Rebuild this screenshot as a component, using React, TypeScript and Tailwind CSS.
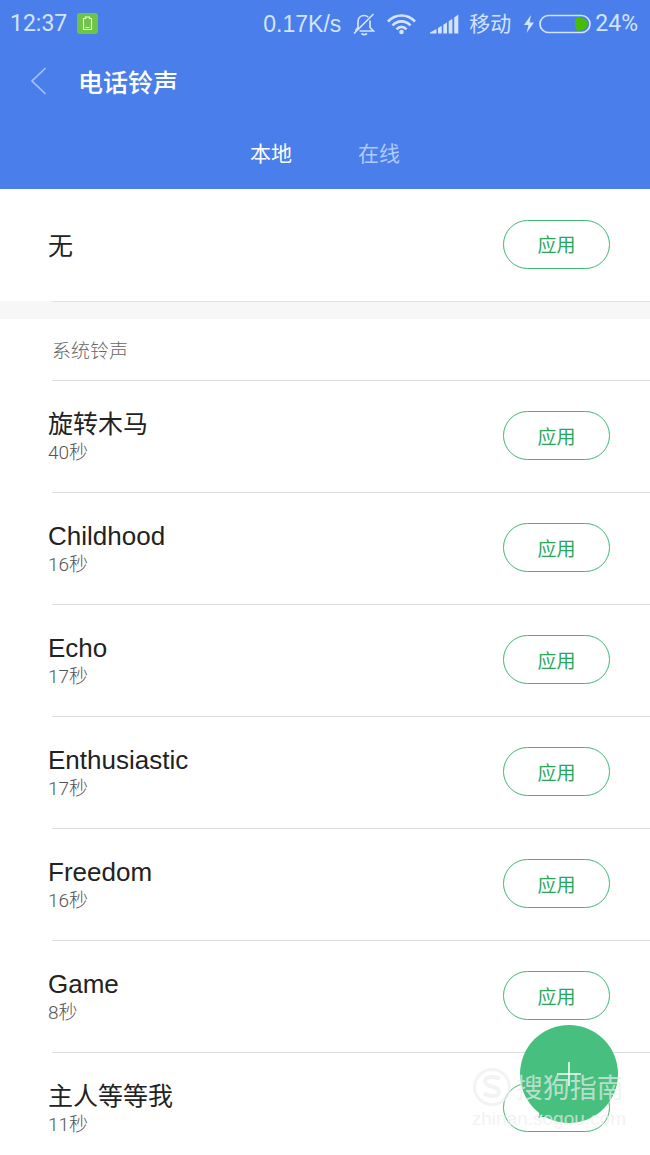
const CJK = "font-['Noto_Sans_CJK_SC',sans-serif]";

type Ringtone = { name: string; length: string; latin?: boolean };

const ringtones: Ringtone[] = [
  { name: "旋转木马", length: "40秒" },
  { name: "Childhood", length: "16秒", latin: true },
  { name: "Echo", length: "17秒", latin: true },
  { name: "Enthusiastic", length: "17秒", latin: true },
  { name: "Freedom", length: "16秒", latin: true },
  { name: "Game", length: "8秒", latin: true },
  { name: "主人等等我", length: "11秒" },
];

function ApplyButton({ label }: { label: string }) {
  return (
    <button
      type="button"
      aria-label={`应用 ${label}`}
      className="h-[49px] w-[107px] shrink-0 rounded-full border border-[#3fb574] text-[19px] leading-6 text-[#25a75c]"
    >
      应用
    </button>
  );
}

function StatusBar() {
  return (
    <div className="flex h-[47px] items-center justify-between pr-3 pl-[10px] font-['Roboto','Noto_Sans_CJK_SC',sans-serif] text-[23px] leading-6 text-[#d3e4ff]">
      <div className="flex items-center gap-[10px]">
        <span>12:37</span>
        <svg className="h-[21px] w-[21px]" viewBox="0 0 21 21" fill="none">
          <rect width="21" height="21" rx="3" fill="#6cc644" />
          <path d="M6.500 5.500h2v-1.500h4v1.500h2v11h-8z M8.500 14.500h4" stroke="#e9ffe0" strokeWidth="1.200" />
        </svg>
      </div>
      <div className="flex items-center">
        <span className="font-['Liberation_Sans',sans-serif]">0.17K/s</span>
        <svg className="ml-3 h-6 w-[22px]" viewBox="0 0 22 24" fill="none" stroke="currentColor" strokeWidth="1.700">
          <path d="M1 21.500 20.500 2M3 19V18l2-2.500V10c0-4 2.500-6.500 6-6.500 1.800 0 3.300.6 4.300 1.700M17 8.500V15.500l3.500 3.500H6.500M8.500 21.500c1.500 1.200 4 1.200 5.500 0" />
        </svg>
        <svg className="ml-3 h-6 w-[29px]" viewBox="0 0 29 24" fill="none" stroke="currentColor" strokeWidth="2.600">
          <path d="M1 9.500C8.500 1.500 20.500 1.500 28 9.500M5.500 13.500C10.500 8 18.500 8 23.500 13.500M9.500 17.300C12.500 14 16.500 14 19.500 17.300" />
          <circle cx="14.500" cy="20" r="2.300" fill="currentColor" stroke="none" />
        </svg>
        <svg className="ml-[14px] h-6 w-[29px]" viewBox="0 0 29 24" fill="currentColor">
          <path d="M0 21.500V20.500L6.500 17V21.500zM8 16 11.700 13.700V21.500H8zM13.300 12.800 17 10.500V21.500H13.300zM18.700 9.300 22.400 6.800V21.500H18.700zM24.200 5.500 28.300 2.500V21.500H24.200z" />
        </svg>
        <span className="ml-[10px] text-[21px]">移动</span>
        <svg className="ml-3 h-6 w-3" viewBox="0 0 12 24" fill="currentColor">
          <path d="M8 3 1 13h4.500L3.500 21 11 10.500H6.500z" />
        </svg>
        <svg className="ml-1 h-6 w-[52px]" viewBox="0 0 52 24" fill="none">
          <path d="M37 5.500h5a6.500 6.500 0 0 1 0 13h-5q-2-6.500 0-13z" fill="#46bd08" />
          <rect x="1" y="3.500" width="50" height="17" rx="8.500" stroke="currentColor" strokeWidth="1.700" />
        </svg>
        <span className="ml-1">24%</span>
      </div>
    </div>
  );
}

export default function App() {
  return (
    <div className={`relative flex h-screen flex-col overflow-hidden bg-white ${CJK}`}>
      <header className="shrink-0 bg-[#4a7eeb]">
        <StatusBar />
        <div className="flex h-[67px] items-center gap-8 pl-[30px]">
          <button type="button" aria-label="返回" className="text-[#a4c2f8]">
            <svg className="h-7 w-4" viewBox="0 0 16 28" fill="none" stroke="currentColor" strokeWidth="1.700">
              <path d="M15.500 1 2 14l13.500 13" />
            </svg>
          </button>
          <h1 className="text-[25px] leading-8 font-medium text-white">电话铃声</h1>
        </div>
        <nav className="flex h-[75px] justify-center gap-[66px] pt-[22px] text-[21px] leading-8">
          <button type="button" aria-current="page" className="h-8 text-white">
            本地
          </button>
          <button type="button" className="h-8 text-[#b0caff]">
            在线
          </button>
        </nav>
      </header>

      <main className="min-h-0 flex-1 overflow-y-auto [scrollbar-width:none]">
        <div className="flex h-28 items-center justify-between pr-10 pb-[2px] pl-12">
          <span className="text-[25px] leading-8 text-[#222]">无</span>
          <ApplyButton label="无" />
        </div>
        <div className="h-[18px] bg-[#f7f7f7] pl-[52px]">
          <div className="h-px bg-[#e2e2e2]" />
        </div>
        <h2 className="ml-[52px] flex h-[62px] items-center border-b border-[#dcdcdc] text-[19px] leading-6 font-light text-[#666]">
          系统铃声
        </h2>
        <ul>
          {ringtones.map((tone) => (
            <li key={tone.name}>
              <div className="flex h-[111px] items-center justify-between pr-10 pb-[2px] pl-12">
                <div>
                  <div
                    className={
                      tone.latin
                        ? "h-8 font-['Liberation_Sans',sans-serif] text-[26px] leading-8 text-[#222]"
                        : "h-8 text-[25px] leading-7 text-[#222]"
                    }
                  >
                    {tone.name}
                  </div>
                  <div className="h-6 font-['Roboto','Noto_Sans_CJK_SC',sans-serif] text-[19px] leading-[26px] font-light text-[#555]">
                    {tone.length}
                  </div>
                </div>
                <ApplyButton label={tone.name} />
              </div>
              <div className="ml-[52px] h-px bg-[#dcdcdc]" />
            </li>
          ))}
        </ul>
      </main>

      <button
        type="button"
        aria-label="添加铃声"
        className="absolute right-8 bottom-8 flex h-[98px] w-[98px] items-center justify-center rounded-full bg-[#47bf7e] text-white"
      >
        <svg className="h-6 w-6" viewBox="0 0 24 24" fill="none" stroke="currentColor" strokeWidth="1.500">
          <path d="M12 0v24M0 12h24" />
        </svg>
      </button>

      <div className="pointer-events-none absolute right-6 bottom-6 text-[#eceeed]/70">
        <div className="flex items-center gap-1">
          <svg className="h-10 w-10" viewBox="0 0 40 40" fill="none" stroke="currentColor">
            <circle cx="20" cy="20" r="17.500" strokeWidth="3" />
            <path d="M28 12c-4-3-15-3-15 2.500 0 6 14 4 14 10.500 0 5-10 5-15 1.500" strokeWidth="4" />
          </svg>
          <span className="text-[27px] leading-10">搜狗指南</span>
        </div>
        <div className="font-['Liberation_Sans',sans-serif] text-[19px] leading-6">zhinan.sogou.com</div>
      </div>
    </div>
  );
}
